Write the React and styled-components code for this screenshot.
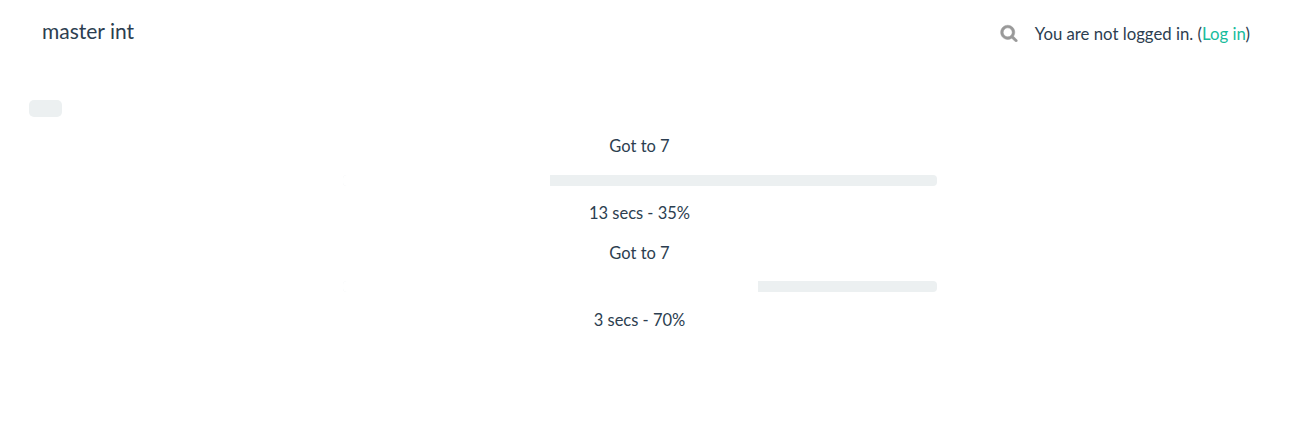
import React from "react";
import styled, { createGlobalStyle } from "styled-components";

const Global = createGlobalStyle`
  html, body { margin: 0; padding: 0; background: #fff; }
  body { font-family: Lato, "Open Sans", sans-serif; font-size: 16.5px; line-height: 23.5px; color: #2c3e50; }
`;

const Page = styled.div`
  width: 1280px;
  height: 430px;
  overflow: hidden;
`;

const Navbar = styled.header`
  display: flex;
  align-items: flex-start;
  justify-content: space-between;
  height: 100px;
  box-sizing: border-box;
  padding: 17px 30px 0 42px;
`;

const Brand = styled.div`
  font-size: 21px;
  line-height: 28px;
`;

const UserArea = styled.div`
  display: flex;
  align-items: center;
  height: 32px;
  padding-top: 1px;
  font-size: 16.75px;
`;

const SearchIcon = styled.svg`
  width: 18px;
  height: 18px;
  fill: #999;
  stroke: #999;
  stroke-width: 50;
  margin: -2px 17px 0 0;
`;

const LogIn = styled.a`
  color: #18bc9c;
  text-decoration: none;
`;

const ToolbarStub = styled.div`
  width: 33px;
  height: 17px;
  margin-left: 29px;
  border-radius: 5px;
  background: #ecf0f1;
`;

const Tasks = styled.main`
  display: flex;
  flex-direction: column;
  align-items: center;
  padding: 18px 1px 0 0;
`;

const Task = styled.section`
  width: 594px;
  display: flex;
  flex-direction: column;
  align-items: center;
  margin-bottom: 16.1px;
`;

const Label = styled.div`
  height: 23.5px;
`;

const Track = styled.div`
  width: 100%;
  height: 11px;
  margin: 16.1px 0 16.4px;
  border-radius: 4px;
  background: #ecf0f1;
  overflow: hidden;
`;

const Fill = styled.div`
  height: 100%;
  background: #fff;
`;

const tasks = [
  { label: "Got to 7", status: "13 secs - 35%", pct: 35 },
  { label: "Got to 7", status: "3 secs - 70%", pct: 70 },
];

export default function App() {
  return (
    <Page>
      <Global />
      <Navbar>
        <Brand>master int</Brand>
        <UserArea>
          <SearchIcon viewBox="0 0 1792 1792">
            <path d="M1216 832q0-185-131.500-316.500t-316.500-131.500-316.500 131.500-131.500 316.500 131.500 316.500 316.500 131.500 316.500-131.500 131.500-316.500zm512 832q0 52-38 90t-90 38q-54 0-90-38l-343-342q-179 124-399 124-143 0-273.500-55.500t-225-150-150-225-55.500-273.500 55.500-273.500 150-225 225-150 273.500-55.500 273.500 55.500 225 150 150 225 55.500 273.500q0 220-124 399l343 343q37 37 37 90z" />
          </SearchIcon>
          <span>
            You are not logged in. (<LogIn href="#">Log in</LogIn>)
          </span>
        </UserArea>
      </Navbar>
      <ToolbarStub />
      <Tasks>
        {tasks.map((t, i) => (
          <Task key={i}>
            <Label>{t.label}</Label>
            <Track>
              <Fill style={{ width: `${t.pct}%` }} />
            </Track>
            <Label>{t.status}</Label>
          </Task>
        ))}
      </Tasks>
    </Page>
  );
}
